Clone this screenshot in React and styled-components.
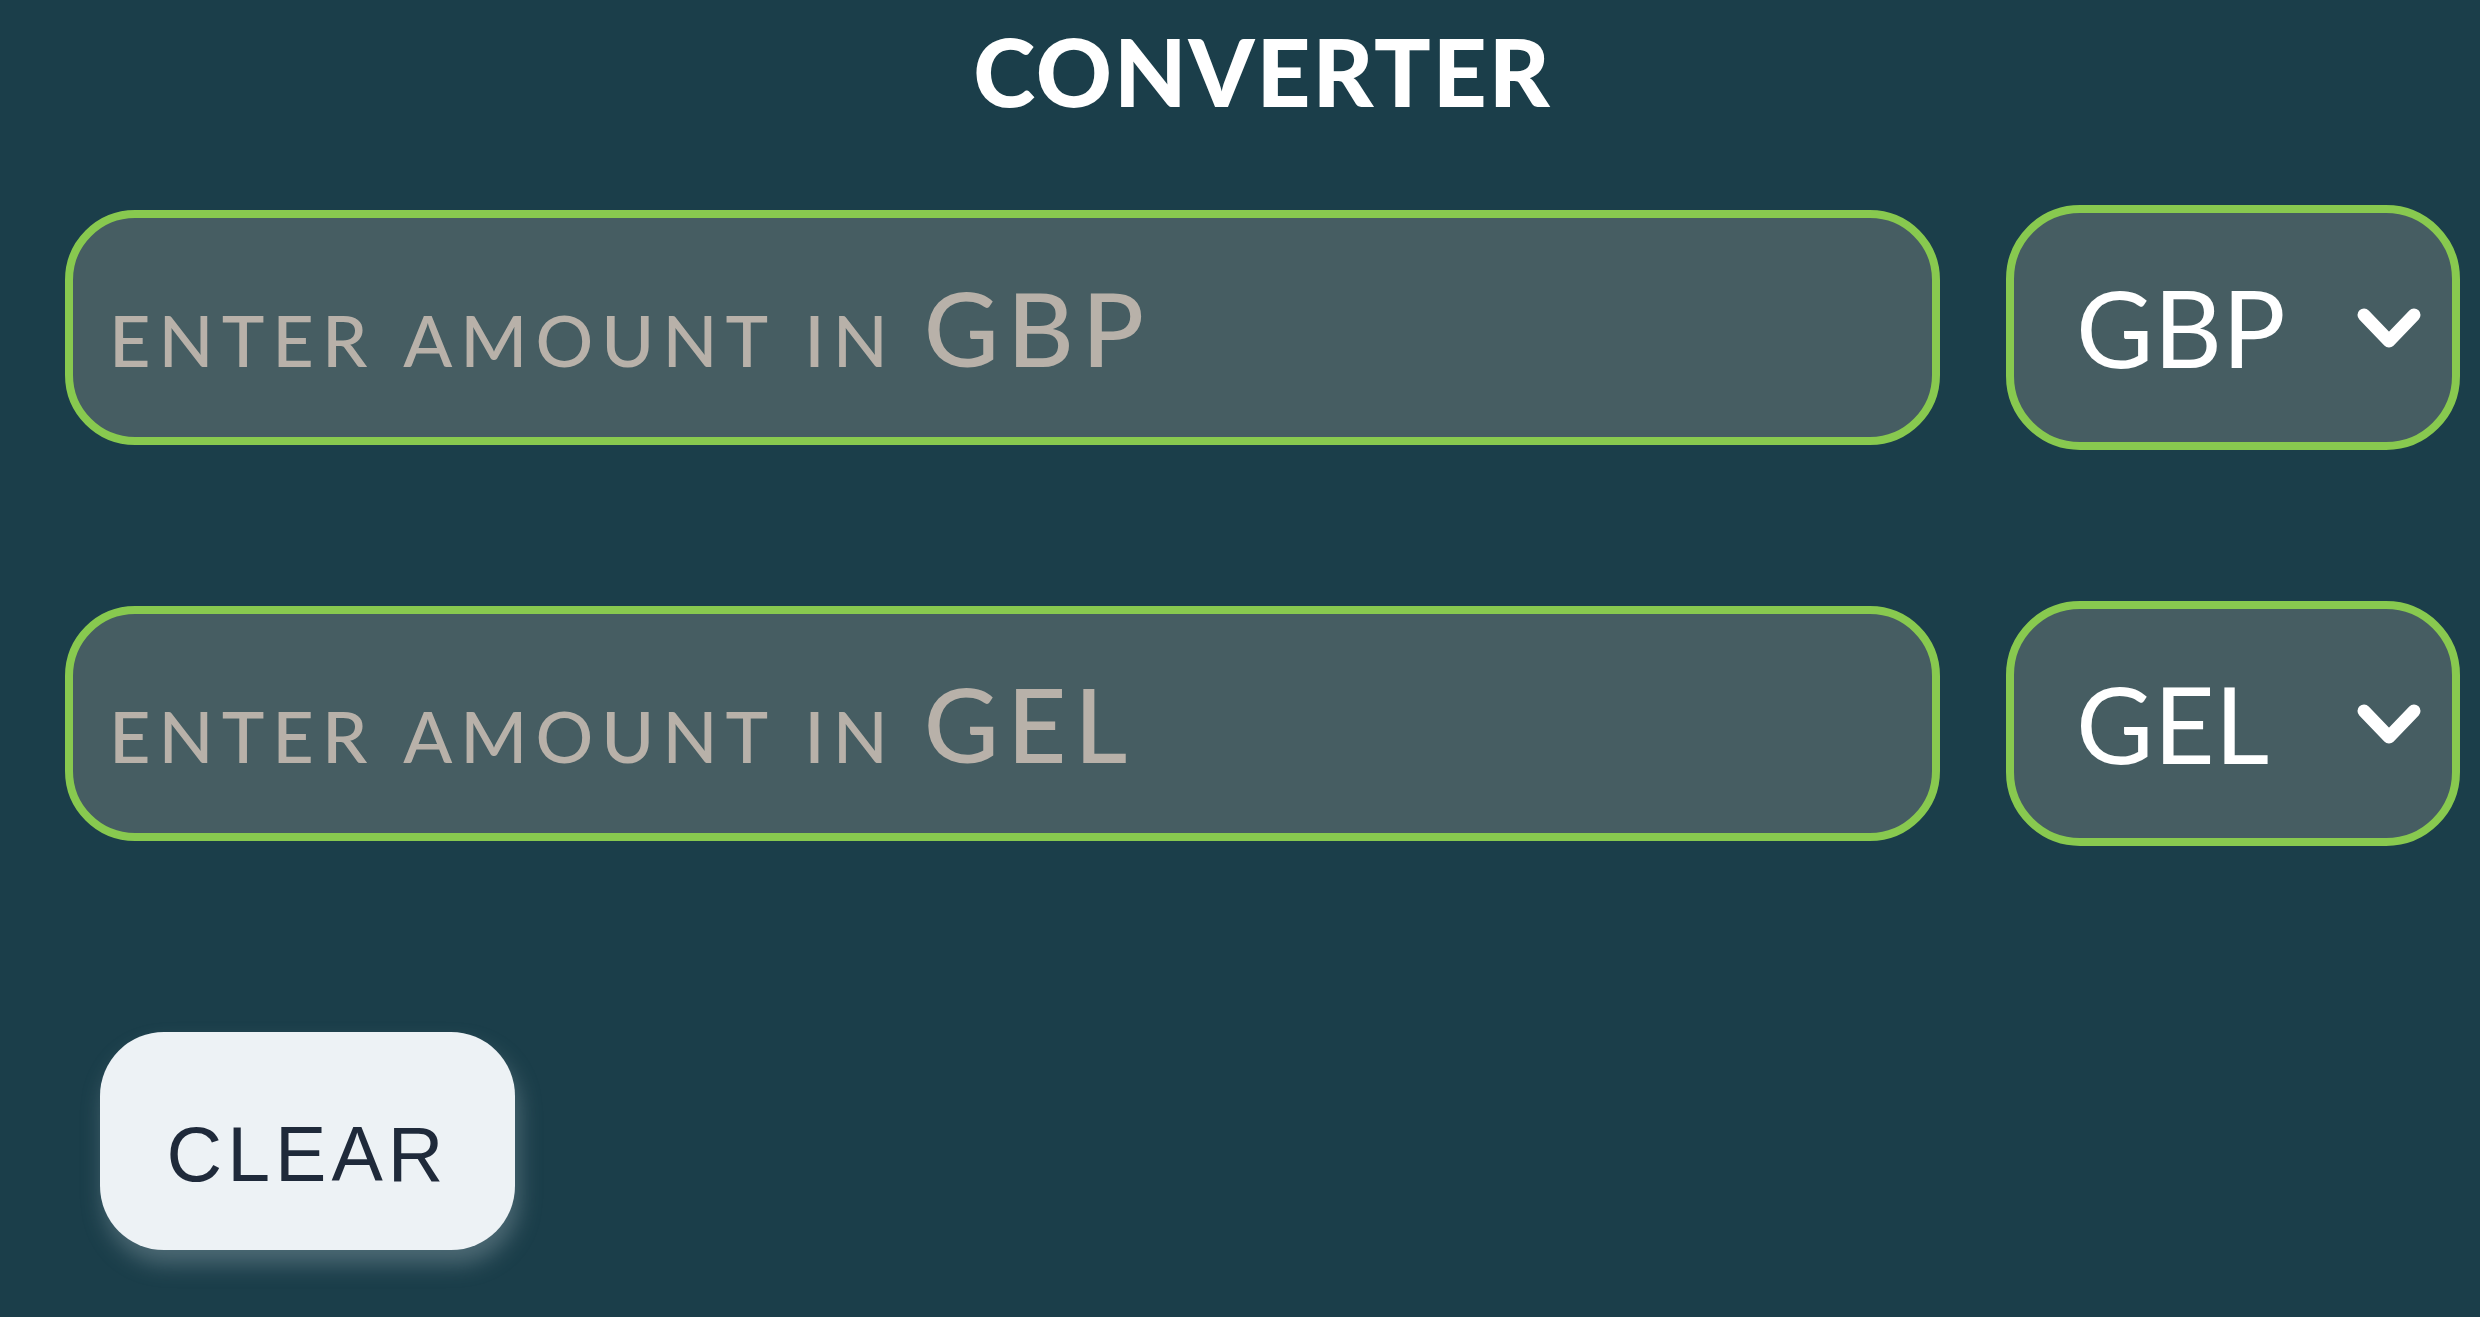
import React from "react";
import styled, { createGlobalStyle } from "styled-components";

const GlobalStyle = createGlobalStyle`
  html, body {
    margin: 0;
    padding: 0;
    background: #1b3e4a;
  }
  body {
    font-family: Lato, "Noto Sans", sans-serif;
  }
  * { box-sizing: border-box; }
`;

const Page = styled.main`
  width: 2480px;
  height: 1317px;
  padding: 0 20px 0 65px;
  display: flex;
  flex-direction: column;
  background: #1b3e4a;
`;

const Title = styled.h1`
  margin: 15px 0 0;
  font-family: Lato, sans-serif;
  font-weight: 900;
  font-size: 94px;
  line-height: 1.2;
  letter-spacing: 2px;
  color: #ffffff;
  text-align: center;
`;

const Rows = styled.section`
  display: flex;
  flex-direction: column;
  gap: 151px;
  margin-top: 77px;
`;

const Row = styled.div`
  display: flex;
  align-items: center;
  gap: 66px;
  height: 245px;
`;

const AmountInput = styled.input`
  flex: 1;
  height: 235px;
  min-width: 0;
  padding: 0 36px;
  border: 8px solid #88c94f;
  border-radius: 70px;
  background: #465d62;
  color: #f2f2f2;
  font-family: Lato, sans-serif;
  font-size: 103px;
  outline: none;

  &::placeholder {
    color: #b8b1a9;
    font-variant: small-caps;
    font-weight: 500;
    letter-spacing: 8px;
    word-spacing: -6px;
  }
`;

const SelectWrap = styled.div`
  position: relative;
  width: 454px;
  height: 245px;
  flex: none;
`;

const CurrencySelect = styled.select`
  appearance: none;
  -webkit-appearance: none;
  width: 100%;
  height: 100%;
  padding: 0 0 0 62px;
  border: 8px solid #88c94f;
  border-radius: 74px;
  background: #465d62;
  color: #ffffff;
  font-family: Lato, sans-serif;
  font-size: 106px;
  outline: none;
`;

const Chevron = styled.svg`
  position: absolute;
  right: 38px;
  top: 101px;
  width: 66px;
  height: 45px;
  pointer-events: none;
`;

const Actions = styled.div`
  display: flex;
  margin-top: 186px;
  padding-left: 35px;
`;

const ClearButton = styled.button`
  width: 415px;
  height: 218px;
  padding: 28px 0 0;
  border: none;
  border-radius: 64px;
  background: #edf2f5;
  color: #1f2a3a;
  font-family: "Liberation Sans", Arial, sans-serif;
  font-size: 77px;
  letter-spacing: 5px;
  text-transform: uppercase;
  box-shadow: 4px 14px 22px rgba(170, 185, 195, 0.35);
  display: flex;
  align-items: center;
  justify-content: center;
`;

const currencies = ["GBP", "GEL", "USD", "EUR"];

function CurrencyRow({ code }) {
  return (
    <Row>
      <AmountInput type="text" placeholder={`enter amount in ${code}`} />
      <SelectWrap>
        <CurrencySelect defaultValue={code}>
          {currencies.map((c) => (
            <option key={c} value={c}>
              {c}
            </option>
          ))}
        </CurrencySelect>
        <Chevron viewBox="0 0 66 45">
          <polyline
            points="8,9 33,35 58,9"
            fill="none"
            stroke="#ffffff"
            strokeWidth="13"
            strokeLinecap="round"
            strokeLinejoin="round"
          />
        </Chevron>
      </SelectWrap>
    </Row>
  );
}

export default function App() {
  return (
    <>
      <GlobalStyle />
      <Page>
        <Title>CONVERTER</Title>
        <Rows>
          <CurrencyRow code="GBP" />
          <CurrencyRow code="GEL" />
        </Rows>
        <Actions>
          <ClearButton type="button">Clear</ClearButton>
        </Actions>
      </Page>
    </>
  );
}
